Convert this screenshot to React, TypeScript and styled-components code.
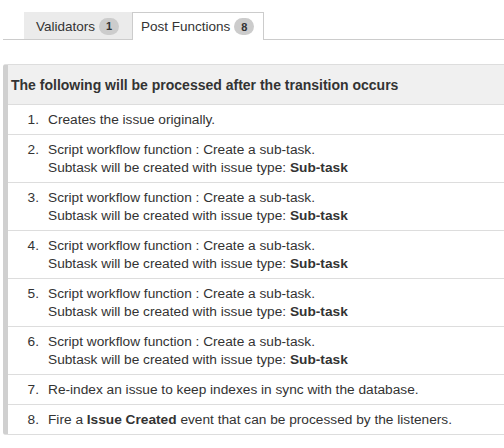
import styled, { createGlobalStyle } from "styled-components";

const GlobalStyle = createGlobalStyle`
  html, body {
    margin: 0;
    padding: 0;
    background: #fff;
    overflow: hidden;
  }
  body {
    font-family: "Liberation Sans", Arial, sans-serif;
    color: #333;
    font-size: 14px;
  }
`;

const Page = styled.div`
  width: 540px;
  padding: 12px 0 0 3px;
`;

const TabBar = styled.ul`
  display: flex;
  list-style: none;
  margin: 0;
  padding: 0 0 0 21px;
  border-bottom: 1px solid #ccc;
  height: 27px;
`;

const Tab = styled.li<{ $active?: boolean }>`
  display: flex;
  align-items: center;
  gap: 4px;
  box-sizing: border-box;
  padding: 0 ${(p) => (p.$active ? "9px" : "12px")} 0 ${(p) => (p.$active ? "8px" : "11px")};
  font-size: 13.5px;
  background: ${(p) => (p.$active ? "#fff" : "#ebebeb")};
  border: 1px solid ${(p) => (p.$active ? "#ccc" : "#ebebeb")};
  border-bottom: none;
  height: ${(p) => (p.$active ? "28px" : "27px")};
  color: #333;
`;

const Badge = styled.span`
  display: inline-flex;
  align-items: center;
  justify-content: center;
  min-width: 20px;
  height: 17px;
  border-radius: 9px;
  background: #ccc;
  color: #333;
  font-size: 11px;
  font-weight: bold;
`;

const Panel = styled.div`
  margin-top: 24px;
  border: 1px solid #ddd;
  border-left: 5px solid #d0d0d0;
  border-radius: 3px;
`;

const PanelHeader = styled.div`
  height: 39px;
  display: flex;
  align-items: center;
  padding-left: 3px;
  background: #f0f0f0;
  border-bottom: 1px solid #ddd;
  font-weight: bold;
  font-size: 14px;
`;

const Row = styled.div`
  display: flex;
  padding: 6px 0 5px;
  line-height: 18px;
  font-size: 13.7px;
  border-bottom: 1px solid #ddd;
  &:last-child {
    border-bottom: none;
  }
`;

const Num = styled.span`
  width: 40px;
  text-align: right;
  padding-right: 9px;
  box-sizing: border-box;
  flex-shrink: 0;
`;

const Body = styled.div`
  display: flex;
  flex-direction: column;
`;

const subtask = (n: number) => ({
  n,
  lines: [
    <>Script workflow function : Create a sub-task.</>,
    <>
      Subtask will be created with issue type: <b>Sub-task</b>
    </>,
  ],
});

const items = [
  { n: 1, lines: [<>Creates the issue originally.</>] },
  subtask(2),
  subtask(3),
  subtask(4),
  subtask(5),
  subtask(6),
  { n: 7, lines: [<>Re-index an issue to keep indexes in sync with the database.</>] },
  {
    n: 8,
    lines: [
      <>
        Fire a <b>Issue Created</b> event that can be processed by the listeners.
      </>,
    ],
  },
];

export default function App() {
  return (
    <Page>
      <GlobalStyle />
      <TabBar>
        <Tab>
          Validators<Badge>1</Badge>
        </Tab>
        <Tab $active>
          Post Functions<Badge>8</Badge>
        </Tab>
      </TabBar>
      <Panel>
        <PanelHeader>The following will be processed after the transition occurs</PanelHeader>
        {items.map((it) => (
          <Row key={it.n}>
            <Num>{it.n}.</Num>
            <Body>
              {it.lines.map((l, i) => (
                <span key={i}>{l}</span>
              ))}
            </Body>
          </Row>
        ))}
      </Panel>
    </Page>
  );
}
